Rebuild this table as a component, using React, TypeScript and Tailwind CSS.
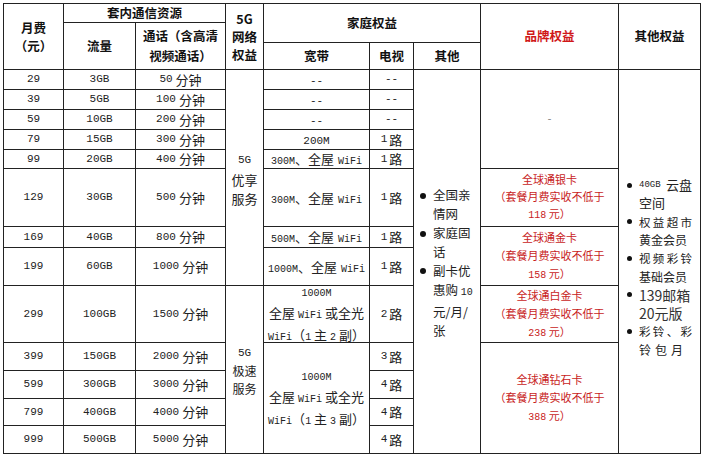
import React from "react";

const RS = [
  "row-start-4",
  "row-start-5",
  "row-start-6",
  "row-start-7",
  "row-start-8",
  "row-start-9",
  "row-start-10",
  "row-start-11",
  "row-start-12",
  "row-start-13",
  "row-start-14",
  "row-start-15",
  "row-start-16",
];

function N({ children }: { children: React.ReactNode }) {
  return <span className="font-['Liberation_Mono',monospace] text-[11px]">{children}</span>;
}

function Ns({ children }: { children: React.ReactNode }) {
  return <span className="font-['Liberation_Mono',monospace] text-[10px]">{children}</span>;
}

function Min({ v }: { v: string }) {
  return (
    <>
      <N>{v}</N>
      <span className="ml-[3px]">分钟</span>
    </>
  );
}

function Lu({ v }: { v: string }) {
  if (v === "--") return <N>--</N>;
  return (
    <>
      <N>{v}</N>
      <span className="ml-[2px]">路</span>
    </>
  );
}

function BB({ speed }: { speed: string }) {
  return (
    <>
      <Ns>{speed}</Ns>
      <span className="tracking-[-3px]">、</span>
      <span className="ml-[3px]">全屋</span>
      <span className="ml-[4px]">
        <Ns>WiFi</Ns>
      </span>
    </>
  );
}

function BulletA({ children }: { children: React.ReactNode }) {
  return (
    <div className="flex gap-[7px]">
      <div className="flex h-[18.9px] w-[6px] shrink-0 items-center">
        <div className="h-[6px] w-[6px] rounded-full bg-[#111]" />
      </div>
      <div className="flex-1">{children}</div>
    </div>
  );
}

function BulletB({ children }: { children: React.ReactNode }) {
  return (
    <div className="flex gap-[7px]">
      <div className="flex h-[18.3px] w-[5px] shrink-0 items-center">
        <div className="h-[5px] w-[5px] rounded-full bg-[#111]" />
      </div>
      <div className="flex-1">{children}</div>
    </div>
  );
}

const cell = "bg-white flex items-center justify-center text-center";
const head = "bg-white flex items-center justify-center text-center font-bold text-[12.5px] text-[#111]";

export default function App() {
  const prices = ["29", "39", "59", "79", "99", "129", "169", "199", "299", "399", "599", "799", "999"];
  const flows = ["3GB", "5GB", "10GB", "15GB", "20GB", "30GB", "40GB", "60GB", "100GB", "150GB", "300GB", "400GB", "500GB"];
  const mins = ["50", "100", "200", "300", "400", "500", "800", "1000", "1500", "2000", "3000", "4000", "5000"];
  const tv = ["--", "--", "--", "1", "1", "1", "1", "1", "2", "3", "4", "4", "4"];
  const bb: React.ReactNode[] = [
    <N>--</N>,
    <N>--</N>,
    <N>--</N>,
    <N>200M</N>,
    <BB speed="300M" />,
    <BB speed="300M" />,
    <BB speed="500M" />,
    <BB speed="1000M" />,
  ];

  return (
    <div className="min-h-screen bg-white pl-[3px] pt-[3px] font-['Noto_Sans_CJK_SC',sans-serif] text-[13px] text-[#222]">
      <div className="grid w-fit grid-cols-[59px_71px_89px_37px_105px_43px_66px_137px_81px] grid-rows-[18px_19px_26px_19px_19px_19px_19px_18px_57px_20px_37px_56px_27px_27px_26px_27px] gap-px bg-[#222] p-px">
        {/* header */}
        <div className={head + " col-start-1 row-start-1 row-span-3 leading-[18px]"}>
          <div>
            月费
            <br />
            （元）
          </div>
        </div>
        <div className={head + " col-start-2 col-span-2 row-start-1"}>套内通信资源</div>
        <div className={head + " col-start-2 row-start-2 row-span-2"}>流量</div>
        <div className={head + " col-start-3 row-start-2 row-span-2 leading-[20px]"}>
          <div>
            通话（含高清
            <br />
            视频通话）
          </div>
        </div>
        <div className={head + " col-start-4 row-start-1 row-span-3 leading-[18px]"}>
          <div>
            5G
            <br />
            网络
            <br />
            权益
          </div>
        </div>
        <div className={head + " col-start-5 col-span-3 row-start-1 row-span-2"}>家庭权益</div>
        <div className={head + " col-start-5 row-start-3"}>宽带</div>
        <div className={head + " col-start-6 row-start-3"}>电视</div>
        <div className={head + " col-start-7 row-start-3"}>其他</div>
        <div className="col-start-8 row-start-1 row-span-3 flex items-center justify-center bg-white text-center text-[12.5px] font-bold text-[#d01818]">
          品牌权益
        </div>
        <div className={head + " col-start-9 row-start-1 row-span-3"}>其他权益</div>

        {/* columns 1-3 and TV */}
        {prices.map((p, i) => (
          <React.Fragment key={p}>
            <div className={cell + " col-start-1 " + RS[i]}>
              <N>{p}</N>
            </div>
            <div className={cell + " col-start-2 " + RS[i]}>
              <N>{flows[i]}</N>
            </div>
            <div className={cell + " col-start-3 " + RS[i]}>
              <Min v={mins[i]} />
            </div>
            <div className={cell + " col-start-6 " + RS[i]}>
              <Lu v={tv[i]} />
            </div>
          </React.Fragment>
        ))}

        {/* 5G column */}
        <div className={cell + " col-start-4 row-start-4 row-span-8 leading-[19px]"}>
          <div>
            <N>5G</N>
            <br />
            优享
            <br />
            服务
          </div>
        </div>
        <div className={cell + " col-start-4 row-start-12 row-span-5 text-[12px] leading-[17.5px]"}>
          <div>
            <N>5G</N>
            <br />
            极速
            <br />
            服务
          </div>
        </div>

        {/* broadband */}
        {bb.map((b, i) => (
          <div key={"bb" + i} className={cell + " col-start-5 " + RS[i]}>
            <div className="whitespace-nowrap">{b}</div>
          </div>
        ))}
        <div className={cell + " col-start-5 row-start-12 leading-[19px]"}>
          <div className="whitespace-nowrap">
            <div>
              <Ns>1000M</Ns>
            </div>
            <div>
              全屋 <Ns>WiFi</Ns> 或全光
            </div>
            <div>
              <Ns>WiFi</Ns>（<Ns>1</Ns> 主 <Ns>2</Ns> 副）
            </div>
          </div>
        </div>
        <div className={cell + " col-start-5 row-start-13 row-span-4 leading-[19px]"}>
          <div className="whitespace-nowrap">
            <div>
              <Ns>1000M</Ns>
            </div>
            <div>
              全屋 <Ns>WiFi</Ns> 或全光
            </div>
            <div>
              <Ns>WiFi</Ns>（<Ns>1</Ns> 主 <Ns>3</Ns> 副）
            </div>
          </div>
        </div>

        {/* 其他 */}
        <div className="col-start-7 row-start-4 row-span-13 flex flex-col justify-center bg-white pl-[6px] pt-[4px] text-[12.5px] leading-[18.9px]">
          <BulletA>
            <div>全国亲</div>
            <div>情网</div>
          </BulletA>
          <BulletA>
            <div>家庭固</div>
            <div>话</div>
          </BulletA>
          <BulletA>
            <div>副卡优</div>
            <div>
              惠购 <Ns>10</Ns>
            </div>
            <div>元/月/</div>
            <div>张</div>
          </BulletA>
        </div>

        {/* 品牌权益 */}
        <div className={cell + " col-start-8 row-start-4 row-span-5 text-[#888]"}>
          <Ns>-</Ns>
        </div>
        <div className={cell + " col-start-8 row-start-9 text-[11px] leading-[17px] text-[#c81c1c]"}>
          <div>
            全球通银卡
            <br />
            （套餐月费实收不低于
            <br />
            <Ns>118</Ns> 元）
          </div>
        </div>
        <div className={cell + " col-start-8 row-start-10 row-span-2 text-[11px] leading-[18px] text-[#c81c1c]"}>
          <div>
            全球通金卡
            <br />
            （套餐月费实收不低于
            <br />
            <Ns>158</Ns> 元）
          </div>
        </div>
        <div className={cell + " col-start-8 row-start-12 text-[11px] leading-[18px] text-[#c81c1c]"}>
          <div>
            全球通白金卡
            <br />
            （套餐月费实收不低于
            <br />
            <Ns>238</Ns> 元）
          </div>
        </div>
        <div className={cell + " col-start-8 row-start-13 row-span-4 text-[11px] leading-[18px] text-[#c81c1c]"}>
          <div>
            全球通钻石卡
            <br />
            （套餐月费实收不低于
            <br />
            <Ns>388</Ns> 元）
          </div>
        </div>

        {/* 其他权益 */}
        <div className="col-start-9 row-start-4 row-span-13 flex flex-col justify-center bg-white pl-[8px] pr-[8px] pt-[12px] text-[12px] leading-[18.3px]">
          <BulletB>
            <div className="flex items-center justify-between">
              <span className="font-['Liberation_Mono',monospace] text-[9px]">40GB</span>
              <span className="text-[13px]">云盘</span>
            </div>
            <div className="text-[13px]">空间</div>
          </BulletB>
          <BulletB>
            <div className="flex justify-between text-[11.5px]">
              <span>权</span>
              <span>益</span>
              <span>超</span>
              <span>市</span>
            </div>
            <div>黄金会员</div>
          </BulletB>
          <BulletB>
            <div className="flex justify-between text-[11.5px]">
              <span>视</span>
              <span>频</span>
              <span>彩</span>
              <span>铃</span>
            </div>
            <div>基础会员</div>
          </BulletB>
          <BulletB>
            <div className="text-[14px] text-[#333]">139邮箱</div>
            <div className="text-[14px] text-[#333]">20元版</div>
          </BulletB>
          <BulletB>
            <div className="flex justify-between text-[11.5px]">
              <span>彩</span>
              <span>铃</span>
              <span>、</span>
              <span>彩</span>
            </div>
            <div className="tracking-[4px]">铃包月</div>
          </BulletB>
        </div>
      </div>
    </div>
  );
}
